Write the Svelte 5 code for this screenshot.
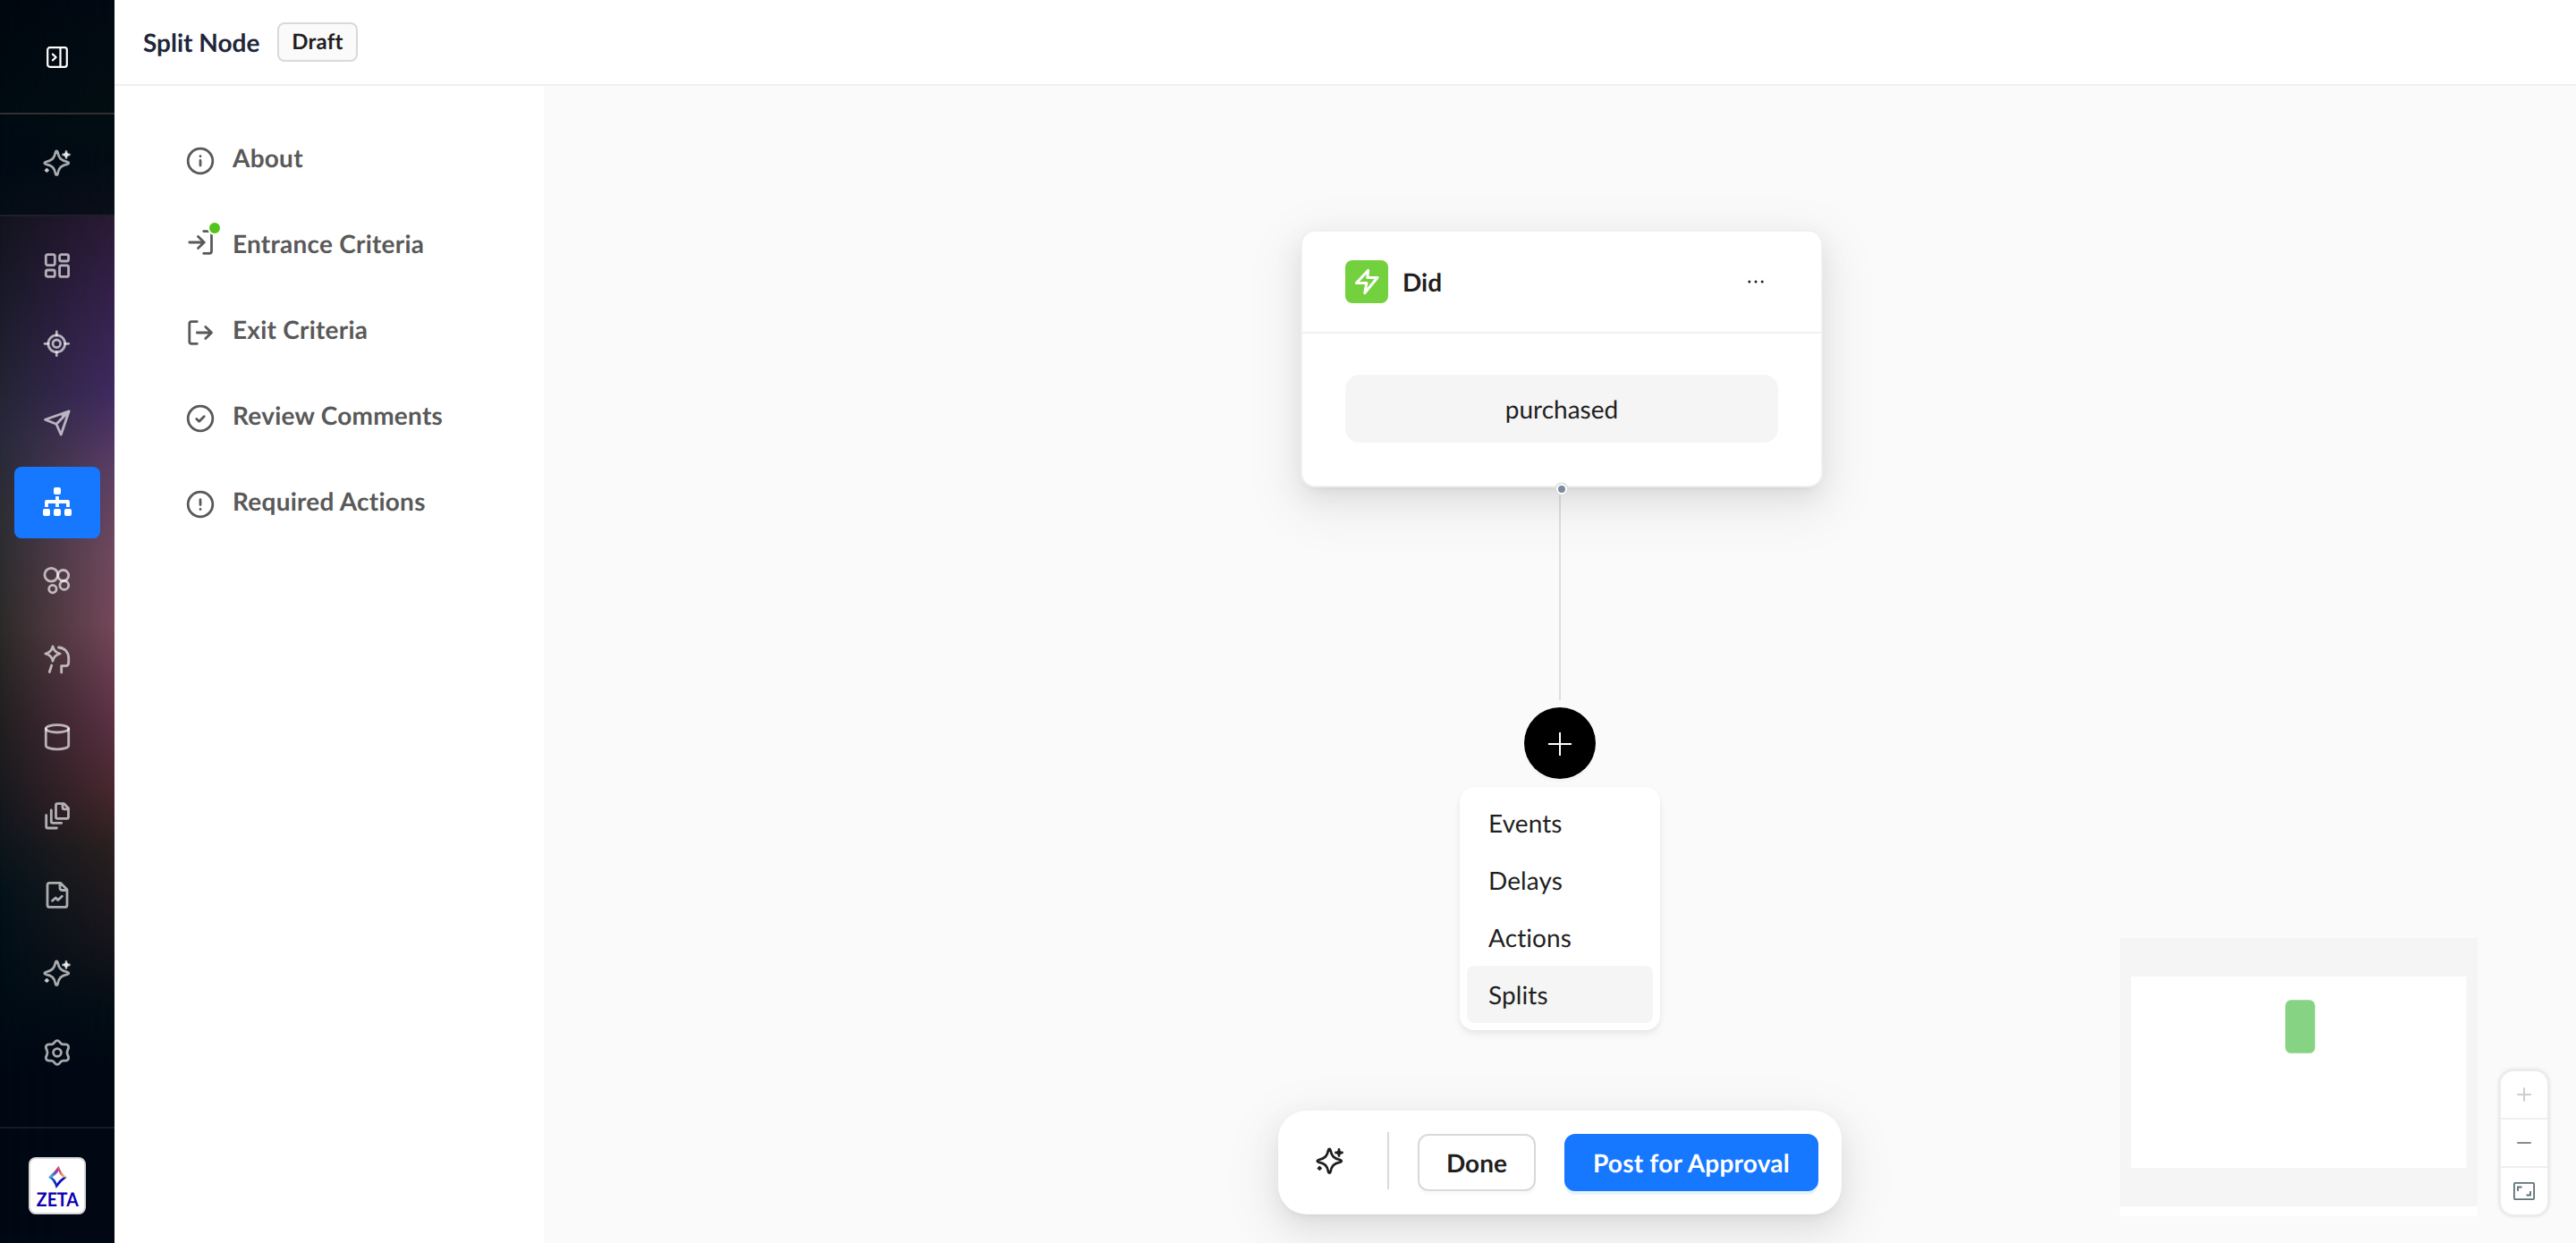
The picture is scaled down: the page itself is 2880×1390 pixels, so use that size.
<script lang="ts">
  const navItems = ["dashboard", "target", "send", "flows", "segments", "insights", "database", "copies", "report", "sparkle", "settings"];
  const activeNav = "flows";

  const steps = [
    { label: "About", icon: "info" },
    { label: "Entrance Criteria", icon: "enter", dot: true },
    { label: "Exit Criteria", icon: "exit" },
    { label: "Review Comments", icon: "check" },
    { label: "Required Actions", icon: "alert" },
  ];

  const menuItems = ["Events", "Delays", "Actions", "Splits"];
  let selected = $state("Splits");
</script>

{#snippet sparkle()}
  <path d="M15.3 2c.7 0 1 .5 1.2 1.3 1.3 6.500 3.700 9.200 10.700 10.700.9.2 1.600.6 1.600 1.300s-.7 1.100-1.600 1.300c-7 1.500-9.400 4.200-10.700 10.700-.2.8-.5 1.300-1.200 1.300s-1-.5-1.200-1.300c-1.300-6.500-3.700-9.200-10.700-10.700-.9-.2-1.600-.6-1.600-1.300s.7-1.100 1.600-1.300c7-1.500 9.400-4.200 10.700-10.700.2-.8.5-1.300 1.200-1.300z" />
  <path d="M26 2.500v7M22.500 6h7" stroke-width="2.800" />
  <path d="M26 3.500l2.500 2.500-2.500 2.500-2.500-2.500zM4.300 21.500l2 1.900-2 1.900-2-1.900z" fill="currentColor" stroke-width="1.400" />
{/snippet}

<div class="app">
  <aside class="sidebar">
    <div class="toggle">
      <svg width="24" height="24" viewBox="0 0 24 24" fill="none" stroke="currentColor" stroke-width="2.200" stroke-linecap="round" stroke-linejoin="round">
        <rect x="1.200" y="1.200" width="21.600" height="21.600" rx="2.500" />
        <path d="M15.500 1.500v21M6.900 8.600l3.700 3.400-3.700 3.400" />
      </svg>
    </div>
    <div class="assistant">
      <svg class="icon" viewBox="0 0 32 32">{@render sparkle()}</svg>
    </div>
    <nav>
      {#each navItems as item}
        <button class="nav-item" class:active={item === activeNav} aria-label={item}>
          <svg class="icon" viewBox="0 0 32 32">
            {#if item === "dashboard"}
              <rect x="3.300" y="3.600" width="10" height="12" rx="2" />
              <rect x="18.600" y="3.600" width="10" height="7.400" rx="2" />
              <rect x="18.600" y="15.800" width="10" height="12.600" rx="2" />
              <rect x="3.300" y="21" width="10" height="7.400" rx="2" />
            {:else if item === "target"}
              <circle cx="15.300" cy="15.300" r="9.400" />
              <circle cx="15.300" cy="15.300" r="4.300" />
              <path d="M15.300 2v4M15.300 24.700v4M2 15.300h4M24.700 15.300h4" />
            {:else if item === "send"}
              <path d="M29.200 2.800 2.500 12.300 15 17.300 20.200 29z M15 17.300 28.500 3.500M22 8l6-4" />
            {:else if item === "flows"}
              <g fill="currentColor" stroke="none">
                <rect x="12" y="0" width="8" height="8" rx="2" />
                <rect x="0" y="24" width="8" height="8" rx="2" />
                <rect x="12" y="24" width="8" height="8" rx="2" />
                <rect x="24" y="24" width="8" height="8" rx="2" />
              </g>
              <path class="branches" d="M4 22v-6h24v6M16 10v12" />
            {:else if item === "segments"}
              <circle cx="9.300" cy="9.700" r="7.400" />
              <circle cx="22.700" cy="10.500" r="6" />
              <circle cx="23.800" cy="21.400" r="4.900" />
              <circle cx="10.900" cy="25.600" r="4.200" />
            {:else if item === "insights"}
              <path d="M11 1.800q1.400 6.800 8.200 8.200q-6.800 1.400-8.200 8.200q-1.400-6.800-8.200-8.200q6.800-1.400 8.200-8.200z" />
              <path d="M17.500 3c7 .3 11 5.500 11.200 11.500v5c0 3-1.200 4.200-3.500 4.200h-4.500V31M9.700 23l-2.400 7.500" />
            {:else if item === "database"}
              <ellipse cx="16" cy="5.800" rx="12.700" ry="4.200" />
              <path d="M3.300 5.800v18.900c0 2.300 5.700 4.100 12.700 4.100s12.700-1.800 12.700-4.100V5.800" />
            {:else if item === "copies"}
              <path d="M16.300 1.600h7.200l5 5.200v9.800q0 1.800-1.800 1.800H16.300q-1.800 0-1.800-1.800V3.400q0-1.800 1.800-1.800zM22 2v3.700q0 2.200 2.200 2.200h4M9.300 9v12.500q0 1.800 1.800 1.800h9.600M3.700 14.700v12.500q0 1.800 1.800 1.800h9.900" />
            {:else if item === "report"}
              <path d="M7.500 2.300h12L27 9.800v17.100q0 2.500-2.500 2.500h-17Q5 29.400 5 26.900V4.800Q5 2.300 7.500 2.300zM19 2.500v5.600q0 2.400 2.400 2.400h5.400M10.500 22.300l3.700-3.300 2.600 2.600 4.600-4.300" />
            {:else if item === "sparkle"}
              {@render sparkle()}
            {:else}
              <path d="M13.300 4.100q2.700-3 5.400 0l1.400 1.700q1 1.100 2.600 1.100h2.600q3.900.5 3.300 4l-1.100 2.700q-1.100 2.400 0 4.800l1.100 2.700q.6 3.500-3.300 4h-2.600q-1.600 0-2.600 1.100l-1.400 1.700q-2.700 3-5.400 0l-1.400-1.700q-1-1.100-2.600-1.100H6.700q-3.900-.5-3.300-4l1.100-2.700q1.100-2.400 0-4.800l-1.100-2.700q-.6-3.500 3.300-4h2.600q1.600 0 2.600-1.100z" />
              <circle cx="16" cy="16" r="4.400" />
            {/if}
          </svg>
        </button>
      {/each}
    </nav>
    <div class="account">
      <div class="logo">
        <svg width="60" height="60" viewBox="0 0 60 60">
          <defs>
            <linearGradient id="cool" x1="0" y1="1" x2="1" y2="0">
              <stop offset="0.150" stop-color="#35b5e8" />
              <stop offset="0.500" stop-color="#6a55b5" />
              <stop offset="0.850" stop-color="#d0306c" />
            </linearGradient>
            <linearGradient id="warm" x1="0" y1="0" x2="1" y2="1">
              <stop offset="0.200" stop-color="#c53283" />
              <stop offset="0.900" stop-color="#ffd65c" />
            </linearGradient>
            <linearGradient id="deep" x1="0" y1="0" x2="1" y2="0">
              <stop offset="0" stop-color="#0a8ad8" />
              <stop offset="0.500" stop-color="#0a10b8" />
            </linearGradient>
          </defs>
          <path d="M31.700 7.700Q27 14.500 20 20.500h4.500q4.500-3 7.200-7z" fill="url(#cool)" />
          <path d="M31.700 7.700Q33.500 15.500 40.700 20.500h-4q-4-2.500-5-7z" fill="url(#warm)" />
          <path d="M20 20.500q6.500 3.500 8.700 12.500 5-7.500 12-12.500h-4q-4.500 3-7.200 7-1.500-4.500-5-7z" fill="url(#deep)" />
          <text x="6.800" y="53.200" textLength="47" lengthAdjust="spacingAndGlyphs">ZETA</text>
        </svg>
      </div>
    </div>
  </aside>

  <div class="page">
    <header>
      <h1>Split Node</h1>
      <span class="tag">Draft</span>
    </header>

    <div class="content">
      <section class="steps">
        {#each steps as step}
          <div class="step">
            <span class="step-icon" class:raised={step.dot}>
              <svg class="icon" viewBox="0 0 32 32">
                {#if step.icon === "info"}
                  <circle cx="16" cy="16" r="13.800" />
                  <path d="M16 15.400v5.700M16 10.700v.1" />
                {:else if step.icon === "enter"}
                  <path d="M3.800 16h16.500M13.500 9.500l6.700 6.500-6.700 6.500M19.700 3.600h6.500q2.300 0 2.300 2.300v20.200q0 2.300-2.300 2.300h-6.500" />
                {:else if step.icon === "exit"}
                  <path d="M12.300 3.600H6.100q-2.300 0-2.300 2.300v20.200q0 2.300 2.300 2.300h6.200M12.300 16h16M21.800 9.500l6.700 6.500-6.700 6.500" />
                {:else if step.icon === "check"}
                  <circle cx="16" cy="16" r="13.800" />
                  <path d="M11.700 16.400l3 2.900 5.500-5.500" />
                {:else}
                  <circle cx="16" cy="16" r="13.800" />
                  <path d="M16 10.700v5.900M16 21.400v.1" />
                {/if}
              </svg>
              {#if step.dot}<i class="dot"></i>{/if}
            </span>
            <span class="step-label">{step.label}</span>
          </div>
        {/each}
      </section>

      <main class="canvas">
        <article class="node">
          <div class="node-head">
            <span class="bolt">
              <svg width="48" height="48" viewBox="0 0 48 48" fill="none" stroke="#fff" stroke-width="3" stroke-linejoin="round">
                <path d="M25.600 11.300 12.400 25.600h11.500L21.700 36.700 36 19.500H24.800z" />
              </svg>
            </span>
            <h2>Did</h2>
            <svg class="more" width="50" height="32" viewBox="0 0 50 32" fill="#1f1f1f">
              <circle cx="17.800" cy="16" r="1.500" />
              <circle cx="25" cy="16" r="1.500" />
              <circle cx="32.200" cy="16" r="1.500" />
            </svg>
          </div>
          <div class="node-body">
            <div class="event">purchased</div>
          </div>
          <i class="handle"></i>
        </article>
        <div class="edge"></div>
        <button class="add" aria-label="Add step">
          <svg width="26" height="26" viewBox="0 0 26 26" stroke="#fff" stroke-width="2"><path d="M0 13h26M13 0v26" /></svg>
        </button>
        <ul class="menu">
          {#each menuItems as item}
            <li><button class:selected={item === selected} onclick={() => (selected = item)}>{item}</button></li>
          {/each}
        </ul>

        <div class="toolbar">
          <svg class="icon" viewBox="0 0 32 32">{@render sparkle()}</svg>
          <i class="separator"></i>
          <button class="btn">Done</button>
          <button class="btn primary">Post for Approval</button>
        </div>

        <div class="minimap">
          <svg width="400" height="300" viewBox="0 0 400 300">
            <rect width="400" height="300" fill="#f5f5f5" />
            <rect x="12.500" y="43" width="375" height="214" fill="#fff" />
            <rect x="185" y="69.300" width="33.300" height="59.500" rx="6.500" fill="#86d383" />
          </svg>
        </div>

        <div class="controls">
          <button class="disabled" aria-label="Zoom in">
            <svg width="16" height="16" viewBox="0 0 16 16" stroke="currentColor" stroke-width="2" stroke-linecap="round"><path d="M1 8h14M8 1v14" /></svg>
          </button>
          <button aria-label="Zoom out">
            <svg width="16" height="16" viewBox="0 0 16 16" stroke="currentColor" stroke-width="2" stroke-linecap="round"><path d="M1 8h14" /></svg>
          </button>
          <button class="fit" aria-label="Fit view">
            <svg width="24" height="20" viewBox="0 0 24 20" fill="none" stroke="currentColor" stroke-width="1.800">
              <rect x="0.900" y="0.900" width="22.200" height="18.200" rx="1" />
              <path d="M5 10V5.500h4.500M19 10v4.500h-4.500" />
            </svg>
          </button>
        </div>
      </main>
    </div>
  </div>
</div>

<style>
  :global(body) {
    margin: 0;
    overflow: hidden;
  }

  .app {
    display: flex;
    height: 1390px;
    font-family: Lato, "Open Sans", sans-serif;
    font-size: 28px;
    font-variant-ligatures: none;
    text-rendering: geometricPrecision;
    color: #1f1f1f;
    background: #fff;
  }

  button {
    font: inherit;
    font-variant-ligatures: none;
    text-rendering: inherit;
    color: inherit;
    background: none;
    border: 0;
    margin: 0;
    padding: 0;
  }

  svg {
    display: block;
    flex: none;
  }

  .icon {
    width: 32px;
    height: 32px;
    fill: none;
    stroke: currentColor;
    stroke-width: 2.8;
    stroke-linecap: round;
    stroke-linejoin: round;
    overflow: visible;
  }

  .branches {
    stroke-width: 3.8;
    stroke-linecap: butt;
  }

  .sidebar {
    position: relative;
    z-index: 0;
    display: flex;
    flex-direction: column;
    width: 128px;
    flex: none;
    color: rgba(255, 255, 255, 0.65);
    background: linear-gradient(#01070f 0, #010b12 120px, #010a14 180px, #050d17 242px, #12131e 242px, #1b1b2a 350px, #28293a 490px, #2d2d33 580px, #2c2a28 700px, #221f20 800px, #16181d 900px, #03111a 1000px, #010d15 1100px, #010814 1200px);
  }

  /* warm glow along the right edge */
  .sidebar::before {
    content: "";
    position: absolute;
    inset: 0;
    z-index: -1;
    background: linear-gradient(#020913 0, #020e13 120px, #020c14 180px, #0c0f1b 242px, #2b1a35 242px, #36214d 340px, #402a60 440px, #5a3e64 520px, #70495f 620px, #75485a 700px, #5d3245 800px, #4a2830 880px, #2a201f 950px, #18151c 1050px, #020d15 1130px, #010814 1200px);
    mask-image: linear-gradient(to right, transparent 0, #000 100%);
  }

  .toggle {
    display: flex;
    justify-content: center;
    align-items: center;
    height: 124px;
    padding-top: 2px;
    color: #fff;
    border-bottom: 2px solid #303030;
  }

  .assistant {
    display: flex;
    justify-content: center;
    align-items: center;
    height: 110px;
    padding-bottom: 2px;
    border-bottom: 2px solid #1c2029;
  }

  nav {
    display: flex;
    flex-direction: column;
    flex: 1;
    gap: 8px;
    padding: 16px 16px 0;
  }

  .nav-item {
    display: flex;
    justify-content: center;
    align-items: center;
    height: 80px;
    padding-bottom: 2px;
    border-radius: 8px;
  }

  .nav-item.active {
    color: #fff;
    background: #1677ff;
  }

  .account {
    display: flex;
    justify-content: center;
    padding: 32px 0;
    border-top: 2px solid #151b27;
  }

  .logo {
    border: 2px solid #d9d9d9;
    border-radius: 8px;
    background: #fff;
  }

  .logo text {
    font-size: 21.5px;
    font-weight: 700;
    fill: #0d00b0;
  }

  .page {
    display: flex;
    flex-direction: column;
    flex: 1;
  }

  header {
    display: flex;
    align-items: center;
    gap: 20px;
    height: 94px;
    padding-left: 32px;
    border-bottom: 2px solid #f0f0f0;
  }

  h1,
  h2 {
    margin: 0;
    font-size: 28px;
    font-weight: 700;
  }

  h1 {
    color: #20263a;
  }

  .tag {
    padding: 0 14px;
    font-size: 24px;
    font-weight: 700;
    line-height: 40px;
    letter-spacing: 0.2px;
    background: #fafafa;
    border: 2px solid #d9d9d9;
    border-radius: 8px;
  }

  .content {
    display: flex;
    flex: 1;
  }

  .steps {
    display: flex;
    flex-direction: column;
    width: 400px;
    box-sizing: content-box;
    padding: 34px 0 0 80px;
    box-sizing: border-box;
    width: 480px;
    color: #595959;
    font-weight: 700;
    letter-spacing: 0.24px;
  }

  .step {
    display: flex;
    align-items: center;
    gap: 20px;
    height: 96px;
  }

  .step-icon {
    position: relative;
    padding-top: 4px;
  }

  .step-icon.raised {
    padding: 0 0 6px;
  }

  .step-label {
    padding-bottom: 4px;
  }

  .dot {
    position: absolute;
    top: -6px;
    right: -6px;
    width: 12px;
    height: 12px;
    border-radius: 50%;
    background: #52c41a;
    box-shadow: 0 0 0 2px #fff;
  }

  .canvas {
    position: relative;
    display: flex;
    flex-direction: column;
    align-items: center;
    flex: 1;
    padding-top: 161px;
    background: #fafafa;
  }

  .node {
    position: relative;
    width: 580px;
    margin-left: 4px;
    background: #fff;
    border: 2px solid #f0f0f0;
    border-radius: 16px;
    box-shadow:
      0 12px 32px rgba(0, 0, 0, 0.08),
      0 6px 12px -8px rgba(0, 0, 0, 0.12),
      0 18px 56px 16px rgba(0, 0, 0, 0.05);
  }

  .node-head {
    display: flex;
    align-items: center;
    gap: 16px;
    padding: 32px 48px;
    border-bottom: 2px solid #f0f0f0;
  }

  .bolt {
    border-radius: 8px;
    background: #73d13d;
  }

  .more {
    margin-left: auto;
  }

  .node-body {
    padding: 46px 48px 48px;
  }

  .event {
    text-align: center;
    line-height: 76px;
    background: #f5f5f5;
    border-radius: 16px;
  }

  .handle {
    position: absolute;
    left: 50%;
    bottom: -10px;
    width: 8px;
    height: 8px;
    margin-left: -6px;
    background: #7d8a9f;
    border: 2px solid #fff;
    border-radius: 50%;
    box-shadow: 0 0 0 1.5px #dcdcdc;
  }

  .edge {
    width: 2px;
    height: 238px;
    background: #dedede;
  }

  .add {
    display: flex;
    justify-content: center;
    align-items: center;
    width: 80px;
    height: 80px;
    margin-top: 8px;
    padding-top: 2px;
    background: #000;
    border-radius: 50%;
    box-shadow: 0 4px 0 rgba(0, 0, 0, 0.02);
  }

  .menu {
    width: 208px;
    margin: 9px 0 0;
    padding: 8px;
    list-style: none;
    background: #fff;
    border-radius: 16px;
    box-shadow:
      0 2px 4px rgba(0, 0, 0, 0.03),
      0 2px 12px -2px rgba(0, 0, 0, 0.04),
      0 6px 10px rgba(0, 0, 0, 0.04);
  }

  .menu button {
    display: block;
    width: 100%;
    padding-left: 24px;
    line-height: 64px;
    letter-spacing: 0.1px;
    text-align: left;
    border-radius: 8px;
  }

  .menu button.selected {
    background: #f5f5f5;
  }

  .toolbar {
    position: absolute;
    left: 821px;
    bottom: 32px;
    display: flex;
    align-items: center;
    height: 116px;
    padding: 0 26px 0 42px;
    background: #fff;
    border-radius: 32px;
    box-shadow:
      0 12px 32px rgba(0, 0, 0, 0.08),
      0 6px 12px -8px rgba(0, 0, 0, 0.12),
      0 18px 56px 16px rgba(0, 0, 0, 0.05);
  }

  .toolbar .icon {
    margin-bottom: 2px;
  }

  .separator {
    width: 2px;
    height: 64px;
    margin: 0 32px 4px 48px;
    background: #d9d9d9;
  }

  .btn {
    height: 64px;
    padding: 0 30px;
    font-weight: 700;
    border: 2px solid #d9d9d9;
    border-radius: 12px;
    box-shadow: 0 4px 0 rgba(0, 0, 0, 0.02);
  }

  .btn.primary {
    margin-left: 32px;
    letter-spacing: 0.22px;
    color: #fff;
    background: #1677ff;
    border-color: #1677ff;
    box-shadow: 0 4px 0 rgba(5, 145, 255, 0.1);
  }

  .minimap {
    position: absolute;
    right: 110px;
    bottom: 30px;
    padding-bottom: 11px;
    background: #fff;
  }

  .controls {
    position: absolute;
    right: 32px;
    bottom: 32px;
    width: 52px;
    background: #fff;
    border-radius: 14px;
    box-shadow:
      0 0 0 3px #ececec,
      0 0 4px 3px rgba(0, 0, 0, 0.06);
  }

  .controls button {
    display: flex;
    justify-content: center;
    align-items: center;
    width: 52px;
    height: 52px;
    color: #8b8b8b;
  }

  .controls button + button {
    border-top: 2px solid #eee;
    height: 54px;
  }

  .controls .disabled {
    color: #cdcdcd;
  }

  .controls .fit {
    color: #5f7277;
  }
</style>
